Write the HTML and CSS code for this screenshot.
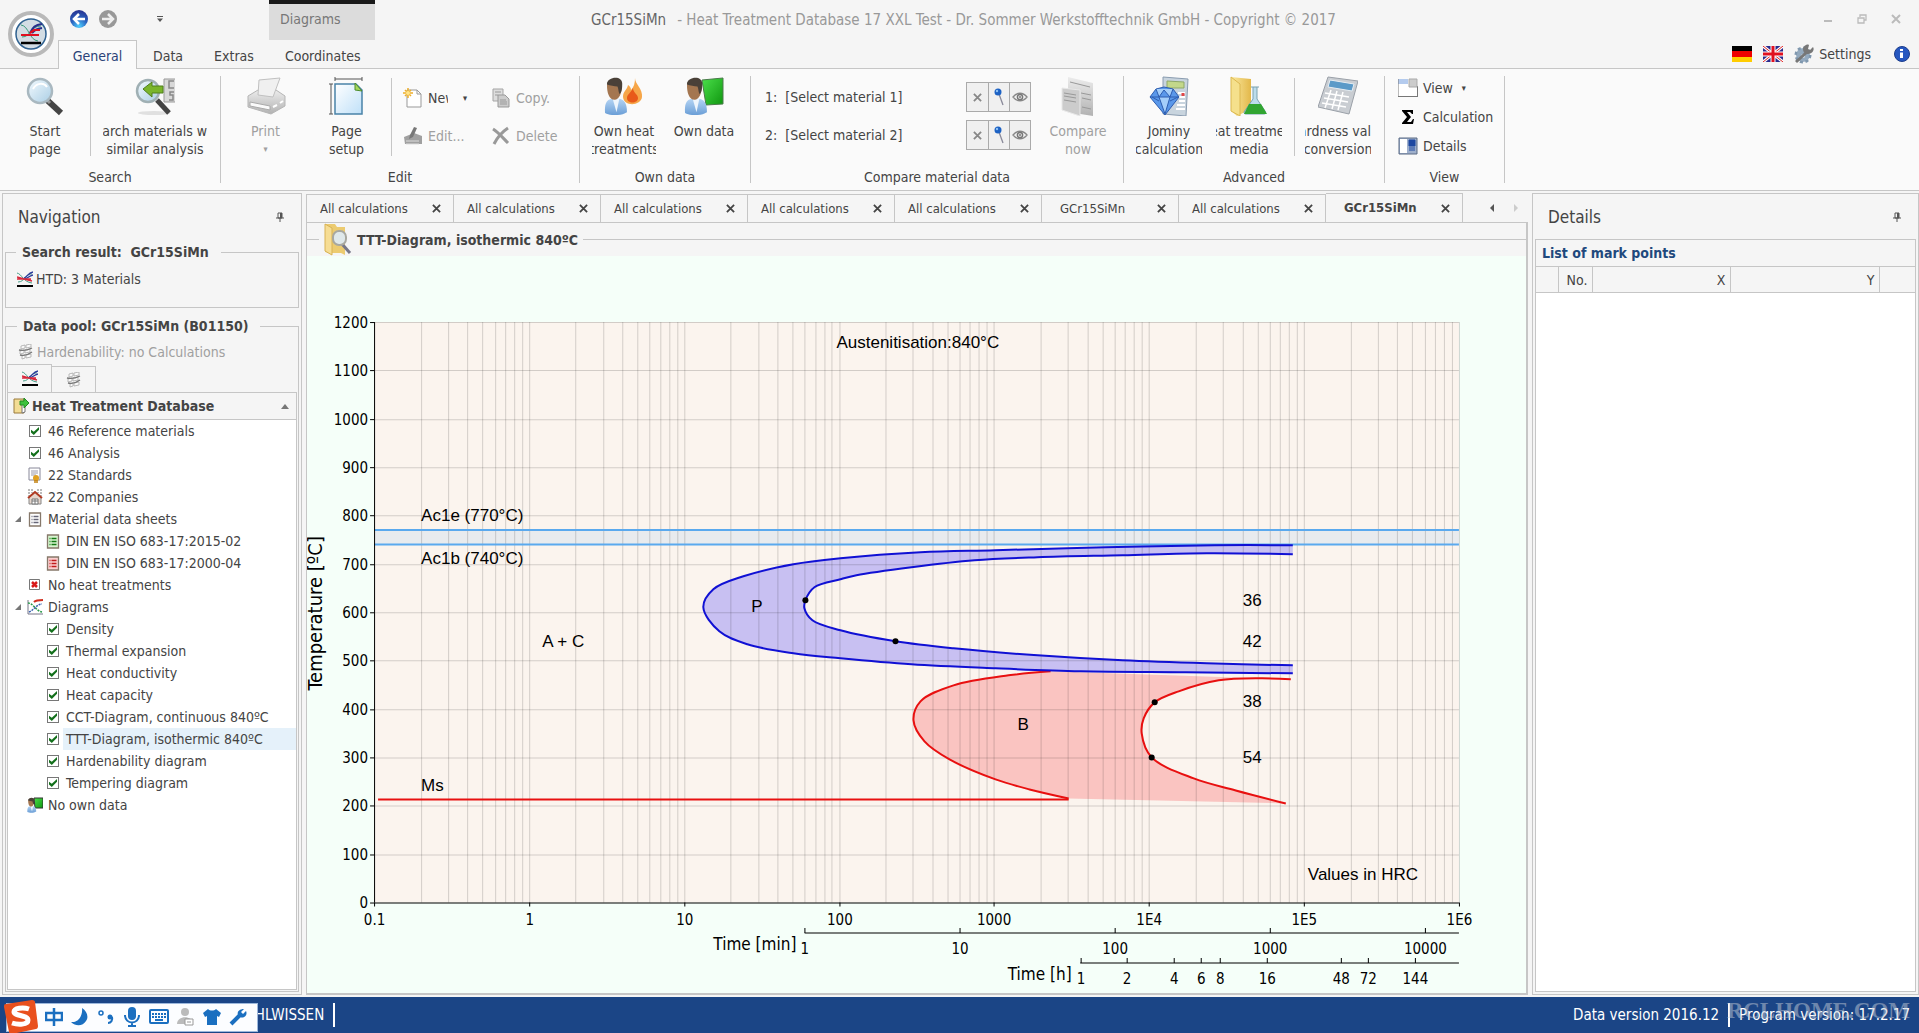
FILE: index.html
```html
<!DOCTYPE html>
<html lang="en">
<head>
    <meta charset="UTF-8">
    <title>GCr15SiMn - Heat Treatment Database 17</title>
    <link rel="stylesheet" href="styles.css">
</head>
<body>

<!-- shared icons -->
<svg class="defs" width="0" height="0">
    <defs>
        <linearGradient id="g-glass" x1="0" y1="0" x2="1" y2="1">
            <stop offset="0" stop-color="#f4fbff"/><stop offset="1" stop-color="#a9cde4"/>
        </linearGradient>
        <linearGradient id="g-page" x1="0" y1="0" x2="1" y2="1">
            <stop offset="0" stop-color="#fff"/><stop offset="1" stop-color="#bfe0f8"/>
        </linearGradient>
        <linearGradient id="g-green" x1="0" y1="0" x2="1" y2="1">
            <stop offset="0" stop-color="#4be04b"/><stop offset="1" stop-color="#0f960f"/>
        </linearGradient>
        <linearGradient id="g-folder" x1="0" y1="0" x2="1" y2="0">
            <stop offset="0" stop-color="#fbe9a0"/><stop offset="1" stop-color="#e3b84a"/>
        </linearGradient>
        <linearGradient id="g-grey" x1="0" y1="0" x2="0" y2="1">
            <stop offset="0" stop-color="#ececec"/><stop offset="1" stop-color="#b2b2b2"/>
        </linearGradient>
        <linearGradient id="g-shirt" x1="0" y1="0" x2="0" y2="1">
            <stop offset="0" stop-color="#b4d4f4"/><stop offset="1" stop-color="#6a9ed6"/>
        </linearGradient>
        <radialGradient id="g-blue" cx=".5" cy=".9" r=".9">
            <stop offset="0" stop-color="#4fd0ff"/><stop offset=".5" stop-color="#2a63c0"/><stop offset="1" stop-color="#27318f"/>
        </radialGradient>
        <symbol id="htd" viewBox="0 0 16 16">
            <path d="M0 2c5 1 6 9 15 10M1 11C8 11 9 2 15 3" stroke="#4aa08a" fill="none"/>
            <path d="M7 7c3-1 4-5 9-6M8 8c3-1 4-3 8-4" stroke="#2a3a9a" fill="none" stroke-width="1.3"/>
            <path d="M0 8h14M0 6l7 2M7 8l8 2" stroke="#d8283c" fill="none" stroke-width="1.4"/>
            <path d="M0 14h16v2H0z" fill="#000"/>
        </symbol>
        <symbol id="coil" viewBox="0 0 16 16">
            <path d="M3 2l4-1v3L3 5zM8 1l5-1v3L8 4zM2 7l4-1v3L2 10zM7 6l5-1v3L7 9zM4 12l3-1v3l-3 1zM8 11l5-1v3l-5 1z" fill="#fafafa" stroke="#aaa" stroke-width=".8"/>
            <path d="M1 6c4 1 9 0 13-2M2 11c4 1 8 0 12-3" fill="none" stroke="#777" stroke-width="1.300"/>
        </symbol>
        <symbol id="person" viewBox="0 0 26 40">
            <path d="M1 38c-1-10 2-15 8-15h6c6 0 9 5 9 14-6 4-18 4-23 1z" fill="url(#g-shirt)"/>
            <path d="M9 23l4 14 3-14z" fill="#eef5fc"/>
            <path d="M3 9c0-7 14-10 15-1 1 7-1 15-7 16-6 0-8-8-8-15z" fill="#a47650"/>
            <path d="M3 8C2 0 20-3 19 8c0 6-1 9-3 10-1-3-1-6-2-8-3 0-8-1-11-2z" fill="#4a4038"/>
        </symbol>
        <symbol id="pin" viewBox="0 0 8 10">
            <path d="M2 1h4v5H2zM0 6h8M4 6v4" fill="none" stroke="#555"/>
            <path d="M4 1h2v5H4z" fill="#555"/>
        </symbol>
        <symbol id="close" viewBox="0 0 10 10">
            <path d="M1 1l8 8M9 1L1 9" stroke="currentColor" stroke-width="2" fill="none"/>
        </symbol>
        <symbol id="bluepin" viewBox="0 0 12 18">
            <path d="M6 6l4 11" stroke="#8a8a9a" stroke-width="1.300"/>
            <circle cx="5" cy="4" r="3.500" fill="#1d62c4"/><circle cx="4" cy="3" r="1.200" fill="#8cc0f4"/>
        </symbol>
        <symbol id="eye" viewBox="0 0 16 10">
            <path d="M1 5c4-5 10-5 14 0-4 5-10 5-14 0z" fill="none" stroke="#888" stroke-width="1.300"/>
            <circle cx="8" cy="5" r="2.600" fill="none" stroke="#777" stroke-width="1.500"/><circle cx="8" cy="5" r="1" fill="#777"/>
        </symbol>
        <symbol id="list" viewBox="0 0 13 15">
            <path d="M1 1h11v13H1z" fill="inherit" stroke="#86786a" stroke-width="1.300"/>
            <path d="M3 4.500h1M5 4.500h5M3 7.500h1M5 7.500h5M3 10.500h1M5 10.500h5" stroke="currentColor" stroke-width="1.300"/>
        </symbol>
    </defs>
</svg>

<header class="top">
    <button class="app" title="Menu">
        <svg width="46" height="46" viewBox="0 0 46 46">
            <circle cx="23" cy="23" r="21" fill="#fff" stroke="#b9b9b9" stroke-width="4"/>
            <circle cx="23" cy="23" r="15" fill="#d3dde4" stroke="#2f6190" stroke-width="1.500"/>
            <path d="M13 14c8 1 8 15 17 16M14 26c9 0 8-11 19-11" stroke="#3a9a78" fill="none"/>
            <path d="M22 22c3-6 5-8 12-9M24 22c3-3 4-4 10-5" stroke="#28308c" stroke-width="2" fill="none"/>
            <path d="M13 24h18M22 22l4-3 6 0" stroke="#e01020" stroke-width="2.200" fill="none"/>
            <path d="M13 32h20" stroke="#000" stroke-width="2.500"/>
        </svg>
    </button>
    <div class="top-main">
        <div class="quick">
            <button title="Back">
                <svg width="18" height="18" viewBox="0 0 18 18"><circle cx="9" cy="9" r="9" fill="url(#g-blue)"/><path d="M15 9H5M9 4L4 9l5 5" stroke="#fff" stroke-width="2.500" fill="none"/></svg>
            </button>
            <button title="Forward">
                <svg width="18" height="18" viewBox="0 0 18 18"><circle cx="9" cy="9" r="9" fill="#989898"/><path d="M3 9h10M9 4l5 5-5 5" stroke="#eee" stroke-width="2.500" fill="none"/></svg>
            </button>
            <button class="quick-more" title="Customize">
                <svg width="6" height="6" viewBox="0 0 6 6"><path d="M0 0h6v1H0zM0 2.500h6L3 6z" fill="#555"/></svg>
            </button>
        </div>
        <nav class="tabs">
            <button class="tab active">General</button>
            <button class="tab">Data</button>
            <button class="tab">Extras</button>
            <button class="tab">Coordinates</button>
        </nav>
    </div>
    <div class="context">Diagrams</div>
    <h1 class="title"><b>GCr15SiMn</b>- Heat Treatment Database 17 XXL Test - Dr. Sommer Werkstofftechnik GmbH - Copyright © 2017</h1>
    <div class="top-right">
        <div class="window">
            <button title="Minimize"><svg width="10" height="10" viewBox="0 0 10 10"><path d="M1 7h8" stroke="#bbb" stroke-width="2"/></svg></button>
            <button title="Restore"><svg width="10" height="10" viewBox="0 0 10 10"><path d="M3 3V1h6v5H7M1 4h6v5H1z" fill="none" stroke="#bbb" stroke-width="1.300"/></svg></button>
            <button title="Close"><svg width="10" height="10"><use href="#close"/></svg></button>
        </div>
        <div class="settings">
            <button title="Deutsch"><svg width="20" height="16" viewBox="0 0 20 16"><path d="M0 0h20v5H0z"/><path d="M0 5h20v6H0z" fill="#e00"/><path d="M0 11h20v5H0z" fill="#fc0"/></svg></button>
            <button title="English">
                <svg width="20" height="16" viewBox="0 0 20 16"><path d="M0 0h20v16H0z" fill="#2a2a8c"/><path d="M0 0l20 16M20 0L0 16" stroke="#fff" stroke-width="3"/><path d="M0 0l20 16M20 0L0 16" stroke="#d22" /><path d="M10 0v16M0 8h20" stroke="#fff" stroke-width="5"/><path d="M10 0v16M0 8h20" stroke="#e01020" stroke-width="3"/></svg>
            </button>
            <button class="with-text">
                <svg width="20" height="20" viewBox="0 0 20 20"><circle cx="9" cy="11" r="7" fill="#9ab0c4" stroke="#7f97ae" stroke-width="3" stroke-dasharray="3 2.500"/><circle cx="9" cy="11" r="6" fill="#93a9be"/><circle cx="9" cy="12" r="2" fill="#dfe7ee"/><path d="M2 18L13 8" stroke="#777" stroke-width="3"/><path d="M12 1c2-1 3 0 3 0l-1 4 2 1 3-3c2 3-1 7-5 7-3 0-5-2-5-5 0-2 1-3 3-4z" fill="#777"/></svg>
                Settings
            </button>
            <button class="info" title="Info">
                <svg width="16" height="16" viewBox="0 0 16 16"><circle cx="8" cy="8" r="7.500" fill="#2657c0" stroke="#1c3c8c"/><path d="M6 6.500h3V12H6zM6 3h3v2H6z" fill="#fff"/></svg>
            </button>
        </div>
    </div>
</header>

<section class="ribbon">
    <div class="group g-search">
        <div class="group-body">
            <button class="big wide">
                <svg width="40" height="40" viewBox="0 0 40 40"><path d="M22 24l14 13" stroke="#444" stroke-width="6"/><path d="M20 22l5 5" stroke="#999" stroke-width="3"/><circle cx="15" cy="15" r="12" fill="url(#g-glass)" stroke="#a9b8c0" stroke-width="2.500"/><path d="M8 13c3-6 11-7 14-2" stroke="#fff" stroke-width="2" fill="none"/></svg>
                <span>Start</span><span>page</span>
            </button>
            <i class="sep"></i>
            <button class="big xwide">
                <svg width="40" height="40" viewBox="0 0 40 40"><ellipse cx="19" cy="37" rx="16" ry="2" fill="#e0e0e0"/><path d="M22 24l12 13" stroke="#444" stroke-width="5"/><circle cx="13" cy="15" r="11" fill="url(#g-glass)" stroke="#a0b0b4" stroke-width="2.500"/><path d="M29 3h12v23H29z" fill="#d8d8d8" stroke="#999"/><path d="M39 5h-5v7h5M39 16h-4v3h3v5h-4" stroke="#888" stroke-width="1.500" fill="none"/><path d="M8 13l9-7v4h11v7H17v4z" fill="#7ab52c" stroke="#4f7f1c"/></svg>
                <span>Search materials with</span><span>similar analysis</span>
            </button>
        </div>
        <h2>Search</h2>
    </div>
    <div class="group g-edit">
        <div class="group-body">
            <button class="big wide" disabled>
                <svg width="40" height="40" viewBox="0 0 40 40"><path d="M2 20l10-6h18l9 6v10l-14 8L2 31z" fill="url(#g-grey)" stroke="#b5b5b5"/><path d="M13 4l21-2-7 19-15-2z" fill="#f0f0f0" stroke="#c0c0c0"/><path d="M4 26l20 4v4L4 30z" fill="#fafafa" stroke="#aaa"/><path d="M27 31l4-2M34 27l3-2" stroke="#fff" stroke-width="2"/></svg>
                <span>Print</span><span class="tiny-arrow">▾</span>
            </button>
            <button class="big wide">
                <svg width="40" height="40" viewBox="0 0 40 40"><path d="M8 3h27M8 1v4M35 1v4M4 8v30M2 8h4M2 38h4" stroke="#555" fill="none"/><path d="M8 8h21l6 6v24H8z" fill="url(#g-page)" stroke="#4a83a8" stroke-width="1.500"/><path d="M28 7l7 8-7-1z" fill="#a6d85c" stroke="#4d8c2c"/></svg>
                <span>Page</span><span>setup</span>
            </button>
            <i class="sep"></i>
            <div class="small-col">
                <button class="small">
                    <svg width="20" height="20" viewBox="0 0 20 20"><path d="M4 2h10l4 4v13H4z" fill="#fff" stroke="#999"/><path d="M14 2v4h4" fill="none" stroke="#999"/><path d="M5 0v10M0 5h10M2 2l6 6M8 2L2 8" stroke="#eeaf2a" stroke-width="1.500"/><circle cx="5" cy="5" r="2" fill="#ffe48a"/></svg>
                    <span class="clip">New</span><span class="arrow">▾</span>
                </button>
                <button class="small" disabled>
                    <svg width="20" height="20" viewBox="0 0 20 20"><path d="M1 11l10-4 8 3v8H2z" fill="#a0a0a0"/><path d="M3 15h13M3 18h13" stroke="#ddd"/><path d="M11 1l3 1-4 9-4 2 1-4z" fill="#777"/></svg>
                    Edit...
                </button>
            </div>
            <div class="small-col">
                <button class="small" disabled>
                    <svg width="20" height="20" viewBox="0 0 20 20"><path d="M2 1h10v12H2z" fill="#ddd" stroke="#a5a5a5"/><path d="M7 7h7l4 4v8H7z" fill="#ccc" stroke="#999"/><path d="M4 4h6M4 7h3M9 12h6M9 14h7M9 16h7" stroke="#999"/></svg>
                    Copy.
                </button>
                <button class="small" disabled>
                    <svg width="20" height="20" viewBox="0 0 20 20"><path d="M2 3c5 3 10 9 15 14M17 2C11 6 6 12 3 18" stroke="#999" stroke-width="3" fill="none"/></svg>
                    Delete
                </button>
            </div>
        </div>
        <h2>Edit</h2>
    </div>
    <div class="group g-own">
        <div class="group-body">
            <button class="big">
                <svg width="40" height="40" viewBox="0 0 40 40"><use href="#person" x="0" y="1" width="25" height="38"/><path d="M31 2c0 6 8 11 7 19-1 9-18 10-19 0 0-6 4-7 5-12 2 1 3 3 3 5 3-3 4-7 4-12z" fill="#f6a649"/><path d="M29 12c0 5 5 6 5 10 0 6-11 6-11 0 0-4 4-5 6-10z" fill="#e85a1a"/></svg>
                <span>Own heat</span><span>treatments</span>
            </button>
            <button class="big">
                <svg width="40" height="40" viewBox="0 0 40 40"><path d="M18 4l21-2v26l-17 1z" fill="url(#g-green)" stroke="#4a7a4a"/><use href="#person" x="0" y="1" width="25" height="38"/></svg>
                <span>Own data</span>
            </button>
        </div>
        <h2>Own data</h2>
    </div>
    <div class="group g-compare">
        <div class="group-body">
            <div class="materials">
                <div class="material">
                    <span>1:&nbsp; [Select material 1]</span>
                    <div class="tools">
                        <button title="Clear"><svg width="9" height="9"><use href="#close"/></svg></button>
                        <button title="Pin"><svg width="12" height="18"><use href="#bluepin"/></svg></button>
                        <button title="Show"><svg width="16" height="10"><use href="#eye"/></svg></button>
                    </div>
                </div>
                <div class="material">
                    <span>2:&nbsp; [Select material 2]</span>
                    <div class="tools">
                        <button title="Clear"><svg width="9" height="9"><use href="#close"/></svg></button>
                        <button title="Pin"><svg width="12" height="18"><use href="#bluepin"/></svg></button>
                        <button title="Show"><svg width="16" height="10"><use href="#eye"/></svg></button>
                    </div>
                </div>
            </div>
            <button class="big" disabled>
                <svg width="40" height="40" viewBox="0 0 40 40"><path d="M10 1l25 6v33l-25-4z" fill="url(#g-grey)"/><path d="M4 12l18 2v26L4 34z" fill="#ccc" stroke="#e8e8e8"/><path d="M12 6l20 5M6 17l12 2M6 20l12 2M6 24l12 2M23 17l10 2M24 22l9 2M24 31l9 2" stroke="#999"/></svg>
                <span>Compare</span><span>now</span>
            </button>
        </div>
        <h2>Compare material data</h2>
    </div>
    <div class="group g-advanced">
        <div class="group-body">
            <button class="big">
                <svg width="40" height="40" viewBox="0 0 40 40"><path d="M14 1l25 2-2 37-23-2z" fill="#c8d4de" stroke="#8a9cb0"/><path d="M18 5l17 1v6H18z" fill="#c3d88a" stroke="#8ea868"/><path d="M29 17h7M30 21h6M30 25h6M28 29h8M27 33h9" stroke="#fff" stroke-width="2"/><path d="M34 17v3" stroke="#e04848" stroke-width="3"/><path d="M7 13l8-2 9 2 6 8-14 18L1 21z" fill="#5a98ea" stroke="#2d5db0"/><path d="M7 13l3 8 5-7 6 7 3-8M1 21h29M10 21l6 17 5-17M3 21l7 4M29 21l-8 4" fill="#a4cefa" stroke="#2d5db0"/></svg>
                <span>Jominy</span><span>calculation</span>
            </button>
            <button class="big">
                <svg width="40" height="40" viewBox="0 0 40 40"><path d="M2 1l20 2v30L8 40l-6-5z" fill="url(#g-folder)"/><path d="M2 1l9 7v32l-9-5z" fill="#f5e08c" stroke="#dcb850"/><path d="M22 11h8M24 11v12L15 36c0 2 1 2 2 2h18c2 0 2-1 1-3L28 23V11" fill="#bcdcec" stroke="#7aa2b0"/><path d="M20 28h12l6 10H15z" fill="#31a531"/></svg>
                <span>Heat treatment</span><span>media</span>
            </button>
            <i class="sep"></i>
            <button class="big">
                <svg width="40" height="40" viewBox="0 0 40 40"><path d="M10 1l30 4-9 33L0 31z" fill="#c9cdd2" stroke="#9aa0a8"/><path d="M12 4l24 4-2 7-24-4z" fill="#5b9ac8" stroke="#e8eef2"/><path d="M7 17l24 4M6 22l24 4M4 27l24 4M13 14L7 32M19 15l-5 18M25 16l-5 18" stroke="#fff" stroke-width="1.500"/></svg>
                <span>Hardness value</span><span>conversion</span>
            </button>
        </div>
        <h2>Advanced</h2>
    </div>
    <div class="group g-view">
        <div class="group-body">
            <div class="view-col">
                <button class="small">
                    <svg width="20" height="20" viewBox="0 0 20 20"><path d="M0 1h20v18H0z" fill="#fff"/><path d="M0 1h10v5H0z" fill="#b4cbee"/><path d="M0 18.500h20M19.500 8v11M0 1v18" stroke="#777" fill="none"/><path d="M11 1h8v8h-8z" fill="#ccc" stroke="#aaa"/></svg>
                    View<span class="arrow">▾</span>
                </button>
                <button class="small">
                    <svg width="20" height="20" viewBox="0 0 20 20"><path d="M4 3h11v4h-1l-2-2H9l4 5-4 5h4l2-3h1l-1 5H4v-1l5-6-5-6z"/></svg>
                    Calculation
                </button>
                <button class="small">
                    <svg width="20" height="20" viewBox="0 0 20 20"><path d="M1 2h18v16H1z" fill="#9fb0cc" stroke="#5a6a84"/><path d="M2 3h7v14H2z" fill="#fff"/><path d="M11 4h6v6h-6zM11 12h6M11 14h6" fill="#1f48a0" stroke="#1f48a0"/></svg>
                    Details
                </button>
            </div>
        </div>
        <h2>View</h2>
    </div>
</section>

<main class="work">
    <aside class="panel nav">
        <div class="panel-head"><h2>Navigation</h2><button title="Auto hide"><svg width="8" height="10"><use href="#pin"/></svg></button></div>
        <fieldset class="box result">
            <legend>Search result:&nbsp; GCr15SiMn</legend>
            <div class="line"><svg width="16" height="16"><use href="#htd"/></svg>HTD: 3 Materials</div>
        </fieldset>
        <fieldset class="box pool">
            <legend>Data pool: GCr15SiMn (B01150)</legend>
            <div class="line off"><svg width="16" height="16"><use href="#coil"/></svg>Hardenability: no Calculations</div>
            <div class="pool-tabs">
                <button class="active" title="Database"><svg width="16" height="16"><use href="#htd"/></svg></button>
                <button title="Hardenability"><svg width="16" height="16"><use href="#coil"/></svg></button>
            </div>
            <div class="pool-head">
                <svg width="16" height="16" viewBox="0 0 16 16"><path d="M1 1h10v14H1z" fill="#f3dc94" stroke="#9a7a3c"/><path d="M9 3v12l3-1V6z" fill="#fff" stroke="#777"/><path d="M7 3h4V0l5 5-5 5V7H7z" fill="#3ec23e" stroke="#238a23"/></svg>
                <h3>Heat Treatment Database</h3>
                <svg width="8" height="5" viewBox="0 0 8 5"><path d="M0 5h8L4 0z" fill="#777"/></svg>
            </div>
            <ul class="tree">
                <li><input type="checkbox" id="n1" checked><label for="n1">46 Reference materials</label></li>
                <li><input type="checkbox" id="n2" checked><label for="n2">46 Analysis</label></li>
                <li><svg width="16" height="16" viewBox="0 0 16 16"><path d="M2 1h11v12H2z" fill="#fff" stroke="#889"/><path d="M4 4h7M4 6h7M4 8h5" stroke="#99a"/><circle cx="9" cy="11" r="3" fill="#e0a020"/><path d="M8 13v3M10 13v3" stroke="#c08010" stroke-width="1.500"/></svg><a href="#">22 Standards</a></li>
                <li><svg width="16" height="16" viewBox="0 0 16 16"><path d="M2 0v7M5 0v4M11 0v4M14 0v7" stroke="#777" stroke-dasharray="2 1"/><path d="M2 8l6-5 6 5v7H2z" fill="#e6d6cc" stroke="#888"/><path d="M1 9l7-6 7 6" stroke="#b03a22" stroke-width="2" fill="none"/><path d="M5 10h6v5H5z" fill="#fff" stroke="#777"/><path d="M8 10v5M5 12h6" stroke="#777"/></svg><a href="#">22 Companies</a></li>
                <li class="open"><svg class="i-white" width="16" height="15"><use href="#list"/></svg><a href="#">Material data sheets</a></li>
                <li class="sub"><svg class="i-green" width="16" height="15"><use href="#list"/></svg><a href="#">DIN EN ISO 683-17:2015-02</a></li>
                <li class="sub"><svg class="i-red" width="16" height="15"><use href="#list"/></svg><a href="#">DIN EN ISO 683-17:2000-04</a></li>
                <li><svg width="16" height="16" viewBox="0 0 16 16"><path d="M2.500 2.500h10v10h-10z" fill="#fff" stroke="#777"/><path d="M5 5l5 5M10 5l-5 5" stroke="#d81818" stroke-width="2.500"/></svg><a href="#">No heat treatments</a></li>
                <li class="open"><svg width="16" height="16" viewBox="0 0 16 16"><path d="M1 1v14h15" fill="none" stroke="#778"/><path d="M1 4c5 0 8 8 14 9" stroke="#2a9a4a" fill="none" stroke-width="1.500" stroke-dasharray="2 1"/><path d="M2 13c5-2 8-8 13-8" stroke="#3a62b0" fill="none" stroke-width="1.500" stroke-dasharray="2 1"/><path d="M7 3c2-2 5-2 9-2" stroke="#d03020" fill="none" stroke-width="2"/></svg><a href="#">Diagrams</a></li>
                <li class="sub"><input type="checkbox" id="d1" checked><label for="d1">Density</label></li>
                <li class="sub"><input type="checkbox" id="d2" checked><label for="d2">Thermal expansion</label></li>
                <li class="sub"><input type="checkbox" id="d3" checked><label for="d3">Heat conductivity</label></li>
                <li class="sub"><input type="checkbox" id="d4" checked><label for="d4">Heat capacity</label></li>
                <li class="sub"><input type="checkbox" id="d5" checked><label for="d5">CCT-Diagram, continuous 840ºC</label></li>
                <li class="sub selected"><input type="checkbox" id="d6" checked><label for="d6">TTT-Diagram, isothermic 840ºC</label></li>
                <li class="sub"><input type="checkbox" id="d7" checked><label for="d7">Hardenability diagram</label></li>
                <li class="sub"><input type="checkbox" id="d8" checked><label for="d8">Tempering diagram</label></li>
                <li><svg width="16" height="16" viewBox="0 0 16 16"><path d="M7 1h9v10H8z" fill="url(#g-green)" stroke="#333"/><use href="#person" x="0" y="0" width="10" height="16"/></svg><a href="#">No own data</a></li>
            </ul>
        </fieldset>
    </aside>

    <section class="center">
        <div class="docs">
            <div class="doc"><button class="name">All calculations</button><button class="x" title="Close"><svg width="9" height="9"><use href="#close"/></svg></button></div>
            <div class="doc"><button class="name">All calculations</button><button class="x" title="Close"><svg width="9" height="9"><use href="#close"/></svg></button></div>
            <div class="doc"><button class="name">All calculations</button><button class="x" title="Close"><svg width="9" height="9"><use href="#close"/></svg></button></div>
            <div class="doc"><button class="name">All calculations</button><button class="x" title="Close"><svg width="9" height="9"><use href="#close"/></svg></button></div>
            <div class="doc"><button class="name">All calculations</button><button class="x" title="Close"><svg width="9" height="9"><use href="#close"/></svg></button></div>
            <div class="doc material-doc"><button class="name">GCr15SiMn</button><button class="x" title="Close"><svg width="9" height="9"><use href="#close"/></svg></button></div>
            <div class="doc"><button class="name">All calculations</button><button class="x" title="Close"><svg width="9" height="9"><use href="#close"/></svg></button></div>
            <div class="doc material-doc active"><button class="name">GCr15SiMn</button><button class="x" title="Close"><svg width="9" height="9"><use href="#close"/></svg></button></div>
            <div class="scroll">
                <button title="Previous"><svg width="4" height="8" viewBox="0 0 4 8"><path d="M4 0v8L0 4z" fill="#555"/></svg></button>
                <button title="Next"><svg width="4" height="8" viewBox="0 0 4 8"><path d="M0 0v8l4-4z" fill="#ccc"/></svg></button>
            </div>
        </div>
        <div class="sheet">
            <div class="sheet-head">
                <svg width="28" height="33" viewBox="0 0 28 33"><path d="M1 1h10l2 3h8v28l-4-2H6l-5-1z" fill="#eccb70"/><path d="M1 1l7 4v27l-7-4z" fill="#f6dd94" stroke="#d8b254"/><path d="M18 21l8 9" stroke="#778" stroke-width="3"/><rect x="9" y="8" width="13" height="14" rx="6" fill="#dfe8ea" stroke="#a8a8a0" stroke-width="2"/></svg>
                <h2>TTT-Diagram, isothermic 840ºC</h2>
            </div>
            <svg class="chart" id="chart" viewBox="0 0 1218 736"></svg>
        </div>
    </section>

    <aside class="panel details">
        <div class="panel-head"><h2>Details</h2><button title="Auto hide"><svg width="8" height="10"><use href="#pin"/></svg></button></div>
        <div class="marks">
            <table>
                <caption>List of mark points</caption>
                <thead>
                <tr><th class="c-mark"></th><th class="c-no">No.</th><th class="c-x">X</th><th>Y</th><th class="c-end"></th></tr>
                </thead>
            </table>
        </div>
    </aside>
</main>

<footer class="status">
    <span class="brand">STAHLWISSEN</span>
    <span class="version">Data version 2016.12</span>
    <span class="program">Program version: 17.2.17<em>RCLHOME.COM</em></span>
    <div class="ime">
        <svg class="sogou" width="36" height="36" viewBox="0 0 36 36"><path d="M3 5l26-4c2 0 3 1 3 2l3 24c0 2-1 3-2 3L9 35c-2 0-3-1-3-2L1 8c0-2 0-3 2-3z" fill="#e9501e"/><path d="M26 10c-6-2-15-1-15 3s14 3 14 8-10 5-16 3" fill="none" stroke="#fff" stroke-width="5"/></svg>
        <svg width="18" height="18" viewBox="0 0 18 18"><path d="M1 5h16v7H1zM9 0v18" fill="none" stroke="#1b6fc0" stroke-width="2.500"/></svg>
        <svg width="18" height="18" viewBox="0 0 18 18"><path d="M11 0c5 3 7 9 4 13-3 5-10 6-15 1 7 1 12-6 11-14z" fill="#1b6fc0"/></svg>
        <svg width="18" height="18" viewBox="0 0 18 18"><circle cx="4" cy="5" r="2" fill="none" stroke="#1b6fc0" stroke-width="1.500"/><circle cx="13" cy="9" r="2.500" fill="#1b6fc0"/><path d="M15 9c1 3-1 6-4 6" fill="none" stroke="#1b6fc0" stroke-width="2"/></svg>
        <svg width="18" height="20" viewBox="0 0 18 20"><rect x="5" y="0" width="8" height="13" rx="4" fill="#1b6fc0"/><path d="M2 8c0 10 14 10 14 0M9 15v4M5 19h8" fill="none" stroke="#1b6fc0" stroke-width="2"/></svg>
        <svg width="20" height="18" viewBox="0 0 20 18"><rect x="1" y="2" width="18" height="13" rx="1" fill="none" stroke="#1b6fc0" stroke-width="2"/><path d="M3 6h14M3 9h14" stroke="#1b6fc0" stroke-width="2" stroke-dasharray="2 1"/><path d="M6 12h8" stroke="#1b6fc0" stroke-width="2"/></svg>
        <svg width="18" height="20" viewBox="0 0 18 20"><circle cx="8" cy="5" r="4" fill="#bbb"/><path d="M0 17c0-9 16-9 16 0z" fill="#bbb"/><path d="M8 12h8v6H8z" fill="#fff" stroke="#999"/><path d="M10 15h4" stroke="#999"/></svg>
        <svg width="18" height="18" viewBox="0 0 18 18"><path d="M5 1c2 2 6 2 8 0l5 4-2 4-2-1v9H4V8L2 9 0 5z" fill="#1b6fc0"/></svg>
        <svg width="18" height="18" viewBox="0 0 18 18"><path d="M2 16l9-9" stroke="#1b6fc0" stroke-width="4"/><path d="M15 1l-3 3 2 2 3-3c2 4-2 8-6 6s-3-8 4-8z" fill="#1b6fc0"/></svg>
    </div>
</footer>

<script src="chart.js"></script>
</body>
</html>
```
FILE: styles.css
```css
* {
    margin: 0;
    padding: 0;
    box-sizing: border-box;
}

body {
    display: flex;
    flex-direction: column;
    min-height: 100vh;
    font: 14px/18px "DejaVu Sans Condensed", "DejaVu Sans", sans-serif;
    color: #444;
    background: #f5f5f5;
}

button {
    font: inherit;
    color: inherit;
    background: none;
    border: none;
}

svg {
    display: block;
    flex-shrink: 0;
}

h1, h2, h3 {
    font-size: inherit;
    font-weight: normal;
}

.defs {
    position: absolute;
}

/* title bar and ribbon tabs */
.top {
    display: flex;
    height: 69px;
    border-bottom: 1px solid #c6c6c6;
}

.app {
    width: 58px;
    padding: 0 4px 0 8px;
}

.top-main {
    width: 211px;
    flex-shrink: 0;
}

.quick {
    display: flex;
    align-items: center;
    gap: 11px;
    height: 40px;
    padding: 0 0 2px 12px;
}

.quick-more {
    margin-left: 29px;
}

.tabs {
    display: flex;
    width: 340px;
    height: 29px;
}

.tab {
    padding: 2px 15px 0 16px;
    white-space: nowrap;
}

.tab.active {
    width: 79px;
    padding: 1px 0 0;
    color: #2b4278;
    background: #fafafa;
    border: 1px solid #c6c6c6;
    border-bottom: none;
}

.context {
    width: 106px;
    height: 40px;
    padding: 6px 11px;
    color: #777;
    background: #dcdcdc;
    border-top: 4px solid #1a1a1a;
}

.title {
    flex: 1;
    padding: 11px 0 0 216px;
    font-size: 15px;
    white-space: nowrap;
    color: #999;
}

.title b {
    margin-right: 11px;
    font-weight: normal;
    color: #666;
}

.top-right {
    display: flex;
    flex-direction: column;
    align-items: flex-end;
    padding-right: 9px;
}

.window {
    display: flex;
    align-items: center;
    gap: 24px;
    height: 40px;
    padding: 0 9px 2px 0;
    color: #bbb;
}

.settings {
    display: flex;
    align-items: center;
    gap: 11px;
    height: 28px;
}

.with-text {
    display: flex;
    align-items: center;
    gap: 5px;
}

.info {
    margin-left: 12px;
}

/* ribbon */
.ribbon {
    display: flex;
    padding: 7px 0;
    background: #fafafa;
    border-bottom: 1px solid #c6c6c6;
}

.group {
    display: flex;
    flex-direction: column;
    height: 107px;
    border-right: 1px solid #c6c6c6;
}

.group h2 {
    line-height: 12px;
    text-align: center;
}

.group-body {
    display: flex;
    height: 96px;
}

.g-search {
    width: 221px;
}

.g-edit {
    width: 359px;
}

.g-edit .group-body {
    padding-left: 4px;
}

.g-own {
    width: 171px;
}

.g-own .group-body,
.g-advanced .group-body {
    gap: 16px;
    padding-left: 12px;
}

.g-compare {
    width: 373px;
}

.g-advanced {
    width: 261px;
}

.g-view {
    width: 120px;
}

.big {
    display: flex;
    flex-direction: column;
    align-items: center;
    width: 66px;
    overflow: hidden;
    white-space: nowrap;
}

.g-own .big {
    width: 64px;
}

.g-advanced .group-body {
    gap: 14px;
}

.big svg {
    margin-bottom: 6px;
}

.big.wide {
    width: 81px;
}

.g-search .wide {
    width: 90px;
}

.big.xwide {
    width: 104px;
    margin-left: 12px;
}

button:disabled {
    color: #a0a0a0;
}

.sep {
    width: 1px;
    height: 78px;
    margin-top: 2px;
    background: #c6c6c6;
}

.g-edit .sep {
    margin: 2px 11px 0 4px;
}

.g-advanced .sep {
    margin: 2px -4px 0 -2px;
}

.tiny-arrow,
.arrow {
    font-size: 9px;
}

.arrow {
    margin-left: 4px;
}

.small-col {
    display: flex;
    flex-direction: column;
    gap: 18px;
    width: 88px;
    padding-top: 12px;
}

.small {
    display: flex;
    align-items: center;
    gap: 5px;
    height: 20px;
    white-space: nowrap;
}

.clip {
    width: 20px;
    overflow: hidden;
}

.clip + .arrow {
    margin-left: 10px;
}

.materials {
    display: flex;
    flex-direction: column;
    gap: 8px;
    width: 280px;
    margin-right: 14px;
    padding: 6px 0 0 14px;
}

.material {
    display: flex;
    align-items: center;
    justify-content: space-between;
}

.tools {
    display: flex;
    height: 30px;
    background: #f0f0f0;
    border: 1px solid #aaa;
    color: #888;
}

.tools button {
    display: flex;
    align-items: center;
    justify-content: center;
    width: 21px;
}

.tools button + button {
    border-left: 1px solid #aaa;
}

.view-col {
    display: flex;
    flex-direction: column;
    gap: 9px;
    padding: 2px 0 0 13px;
}

/* working area */
.work {
    flex: 1;
    display: grid;
    grid-template-columns: 300px minmax(0, 1fr) 387px;
    gap: 4px;
    padding: 2px 0 2px 2px;
}

.panel {
    display: flex;
    flex-direction: column;
    border: 1px solid #c6c6c6;
    padding: 2px;
}

.panel-head {
    display: flex;
    align-items: center;
    justify-content: space-between;
    height: 43px;
    padding: 0 15px 2px 13px;
}

.panel-head h2 {
    font-size: 17px;
}

.box {
    min-width: 0;
    border: 1px solid #c6c6c6;
}

.box legend {
    margin-left: 10px;
    padding: 0 12px 0 6px;
    font-weight: bold;
}

.result {
    height: 65px;
    margin-top: 4px;
}

.pool {
    flex: 1;
    display: flex;
    flex-direction: column;
    margin-top: 9px;
    padding: 0 1px 1px;
}

.line {
    display: flex;
    align-items: center;
    gap: 3px;
    height: 36px;
    padding-left: 11px;
}

.pool .line {
    height: 29px;
    padding-top: 5px;
}

.off {
    color: #a0a0a0;
}

.pool-tabs {
    display: flex;
    align-items: flex-end;
}

.pool-tabs button {
    display: flex;
    justify-content: center;
    width: 44px;
    height: 26px;
    padding-top: 5px;
    border: 1px solid #c6c6c6;
    border-width: 1px 1px 0 0;
}

.pool-tabs .active {
    width: 45px;
    height: 28px;
    border-left-width: 1px;
}

.pool-head {
    display: flex;
    align-items: center;
    gap: 3px;
    height: 28px;
    padding: 0 7px 0 5px;
    border: 1px solid #c6c6c6;
}

.pool-head h3 {
    flex: 1;
    font-weight: bold;
}

.tree {
    flex: 1;
    list-style: none;
    background: #fff;
    border: 1px solid #c6c6c6;
    border-top: none;
}

.tree li {
    display: flex;
    align-items: center;
    height: 22px;
    padding-left: 19px;
}

.tree .sub {
    padding-left: 37px;
}

/* expander triangle */
.tree .open::before {
    content: "";
    width: 6px;
    height: 6px;
    margin: 0 6px 0 -12px;
    background: #777;
    clip-path: polygon(100% 0, 100% 100%, 0 100%);
}

.tree a,
.tree label {
    flex: 1;
    padding-left: 3px;
    margin-left: 2px;
    line-height: 22px;
    color: inherit;
    text-decoration: none;
    white-space: nowrap;
}

.tree .selected label {
    background: #e5f1fa;
}

.tree input {
    display: flex;
    align-items: center;
    justify-content: center;
    width: 12px;
    height: 12px;
    margin: 0 2px;
    appearance: none;
    background: #fff;
    border: 1px solid #777;
}

.tree input:checked::before {
    content: "";
    width: 8px;
    height: 8px;
    background: #14701c;
    clip-path: polygon(0 35%, 35% 60%, 100% 0, 100% 35%, 35% 100%, 0 70%);
}

.i-white {
    fill: #fff;
    color: #667;
}

.i-green {
    fill: #d8f4d0;
    color: #157a15;
}

.i-red {
    fill: #fbd0d0;
    color: #c01c1c;
}

/* document tabs */
.center {
    display: flex;
    flex-direction: column;
}

.docs {
    display: flex;
    align-items: flex-end;
    height: 29px;
    font-size: 13px;
}

.doc {
    display: flex;
    align-items: center;
    justify-content: space-between;
    width: 147px;
    height: 28px;
    padding: 0 12px 0 13px;
    border: 1px solid #c6c6c6;
    border-width: 1px 1px 0 0;
    white-space: nowrap;
}

.doc:first-child {
    width: 148px;
    border-left-width: 1px;
}

.doc.material-doc {
    width: 137px;
    padding-left: 18px;
}

.doc.active {
    height: 29px;
    font-weight: bold;
}

.scroll {
    display: flex;
    align-items: center;
    gap: 20px;
    height: 29px;
    padding-left: 27px;
}

.sheet {
    flex: 1;
    display: flex;
    flex-direction: column;
    background: #f5fff9;
    border: 1px solid #c6c6c6;
    border-width: 1px 2px 2px 1px;
}

.sheet-head {
    display: flex;
    align-items: center;
    gap: 5px;
    height: 33px;
    background: #f5f5f5;
}

.sheet-head::before,
.sheet-head::after {
    content: "";
    width: 12px;
    height: 1px;
    background: #c6c6c6;
}

.sheet-head::after {
    flex: 1;
}

.sheet-head h2 {
    font-weight: bold;
}

/* diagram */
.chart {
    width: 100%;
    font-size: 15px;
}

.plot {
    fill: #fbf4ee;
}

.grid {
    stroke: #000;
    stroke-opacity: .16;
}

.axis {
    stroke: #000;
    fill: none;
}

.band {
    fill: #9fc8ee;
    fill-opacity: .2;
}

.ac {
    stroke: #5aa9ee;
    stroke-width: 2;
}

.pearlite {
    fill: #8078f8;
    fill-opacity: .42;
}

.bainite {
    fill: #f88a8a;
    fill-opacity: .45;
}

.blue {
    fill: none;
    stroke: #1010d4;
    stroke-width: 2;
}

.red {
    fill: none;
    stroke: #e81010;
    stroke-width: 2;
}

.note {
    font-family: "Liberation Sans", Arial, sans-serif;
    font-size: 17px;
}

.unit {
    font-size: 17px;
}

.axis-title {
    font-size: 20px;
}

/* details */
.marks {
    flex: 1;
    background: #fff;
    border: 1px solid #c6c6c6;
}

.marks table {
    width: 100%;
    table-layout: fixed;
    border-collapse: collapse;
    background: #f5f5f5;
}

.marks caption {
    height: 26px;
    padding-left: 6px;
    font-weight: bold;
    line-height: 27px;
    text-align: left;
    color: #1f497d;
    background: #f5f5f5;
}

.marks th {
    height: 26px;
    padding: 0 4px;
    font-weight: normal;
    text-align: right;
    border: 1px solid #c6c6c6;
    border-left: none;
}

.marks .c-mark {
    width: 22px;
}

.marks .c-no {
    width: 34px;
}

.marks .c-x {
    width: 138px;
}

.marks .c-end {
    width: 36px;
    border-right: none;
}

/* status bar */
.status {
    position: relative;
    display: flex;
    align-items: center;
    height: 37px;
    padding: 0 9px 0 230px;
    font-size: 15px;
    color: #fff;
    background: #1b4586;
    border-bottom: 1px solid #0a1a30;
}

.brand {
    flex: 1;
}

.brand::after,
.version::after {
    content: "";
    display: inline-block;
    width: 2px;
    height: 24px;
    margin: 0 9px;
    vertical-align: middle;
    background: #fff;
}

.program {
    position: relative;
}

/* site mark lies over the program version */
.program em {
    position: absolute;
    right: 0;
    bottom: 3px;
    font: bold 23px/20px "Liberation Serif", "Times New Roman", serif;
    color: #c0c8d4;
    opacity: .5;
}

/* floating input method bar */
.ime {
    position: absolute;
    left: 6px;
    bottom: 1px;
    display: flex;
    align-items: center;
    gap: 8px;
    width: 252px;
    height: 29px;
    background: #fcfdff;
    border: 1px solid #9db8dc;
}

.sogou {
    margin: 0 -2px 0 -4px;
}
```
FILE: chart.js
```js
var NS = 'http://www.w3.org/2000/svg';
var chart = document.getElementById('chart');

// plot rectangle
var left = 67, top0 = 66, width = 1084, height = 580;
var decades = 7;

function add(name, attrs, text) {
    var el = document.createElementNS(NS, name);
    for (var key in attrs) {
        el.setAttribute(key, attrs[key]);
    }
    if (text !== undefined) {
        el.textContent = text;
    }
    chart.appendChild(el);
    return el;
}

// seconds -> x, degrees -> y
function tx(sec) {
    return left + (Math.log10(sec) + 1) * width / decades;
}

function ty(deg) {
    return top0 + height - deg * height / 1200;
}

function line(cls, x1, y1, x2, y2) {
    add('line', {'class': cls, x1: x1, y1: y1, x2: x2, y2: y2});
}

function crisp(v) {
    return Math.round(v) + 0.5;
}

function label(text, x, y, cls, anchor) {
    add('text', {x: x, y: y, 'class': cls || '', 'text-anchor': anchor || 'start'}, text);
}

// smooth path through points given relative to the plot rectangle
function curve(points, start) {
    var p = points.map(function (q) {
        return [q[0] + left, q[1] + top0];
    });
    var d = (start || 'M') + p[0].join(' ');
    for (var i = 0; i < p.length - 1; i++) {
        var a = p[i - 1] || p[i], b = p[i], c = p[i + 1], e = p[i + 2] || c;
        var ab = Math.sqrt(Math.hypot(b[0] - a[0], b[1] - a[1])) || 1;
        var bc = Math.sqrt(Math.hypot(c[0] - b[0], c[1] - b[1])) || 1;
        var ce = Math.sqrt(Math.hypot(e[0] - c[0], e[1] - c[1])) || 1;
        var c1 = [], c2 = [];
        for (var k = 0; k < 2; k++) {
            c1[k] = a === b ? b[k] : (ab * ab * c[k] - bc * bc * a[k] + (2 * ab * ab + 3 * ab * bc + bc * bc) * b[k]) / (3 * ab * (ab + bc));
            c2[k] = e === c ? c[k] : (ce * ce * b[k] - bc * bc * e[k] + (2 * ce * ce + 3 * ce * bc + bc * bc) * c[k]) / (3 * ce * (ce + bc));
        }
        d += 'C' + c1.join(' ') + ' ' + c2.join(' ') + ' ' + c.join(' ');
    }
    return d;
}

var pStart = [[918, 223], [840, 223], [731, 225], [621, 228], [546, 230], [466, 236], [419, 242], [369, 254], [339, 267], [329, 285], [345, 309], [373, 322], [419, 331], [466, 336], [537, 342], [621, 346], [706, 349], [811, 350], [918, 351]];
var pEnd = [[918, 232], [832, 231], [748, 233], [663, 235], [600, 238], [537, 245], [482, 253], [466, 257], [440, 265], [431, 278], [430, 286], [438, 298], [466, 308], [521, 319], [579, 326], [663, 333], [748, 338], [832, 341], [918, 343]];
var bStart = [[676, 349], [634, 353], [579, 363], [546, 379], [539, 398], [550, 419], [575, 437], [621, 457], [655, 467], [694, 476]];
var bEnd = [[916, 357], [886, 356], [844, 358], [804, 369], [780, 380], [769, 396], [767, 411], [777, 435], [819, 456], [861, 468], [911, 481]];

add('rect', {'class': 'plot', x: left, y: top0, width: width, height: height});
add('rect', {'class': 'band', x: left, y: ty(770), width: width, height: ty(740) - ty(770)});
add('path', {'class': 'pearlite', d: curve(pStart) + curve(pEnd.slice().reverse(), 'L') + 'Z'});
add('path', {'class': 'bainite', d: curve(bStart) + curve(bEnd.slice().reverse(), 'L') + 'Z'});

// logarithmic grid
var i, k, x, y;
for (i = 0; i < decades; i++) {
    for (k = 2; k <= 10; k++) {
        x = crisp(tx(k * Math.pow(10, i - 1)));
        line('grid', x, top0, x, top0 + height);
    }
}
for (i = 100; i <= 1200; i += 100) {
    y = crisp(ty(i));
    line('grid', left, y, left + width, y);
}

line('ac', left, ty(770), left + width, ty(770));
line('ac', left, ty(740), left + width, ty(740));
line('red', 71, 543, 761, 543);
add('path', {'class': 'red', d: curve(bStart)});
add('path', {'class': 'red', d: curve(bEnd)});
add('path', {'class': 'blue', d: curve(pStart)});
add('path', {'class': 'blue', d: curve(pEnd)});
[[431, 278], [521, 319], [780, 380], [777, 435]].forEach(function (q) {
    add('circle', {cx: q[0] + left, cy: q[1] + top0, r: 3});
});

// temperature axis
line('axis', crisp(left), top0, crisp(left), top0 + height);
for (i = 0; i <= 1200; i += 100) {
    y = crisp(ty(i));
    line('axis', left - 4, y, left, y);
    label(i, 61, y + 5, '', 'end');
}
add('text', {'class': 'axis-title', x: 0, y: 0, 'text-anchor': 'middle', transform: 'translate(15 357) rotate(-90)'}, 'Temperature [ºC]');

// time axes: seconds, minutes, hours
line('axis', left, 646.5, left + width, 646.5);
['0.1', '1', '10', '100', '1000', '1E4', '1E5', '1E6'].forEach(function (t, n) {
    x = crisp(left + n * width / decades);
    line('axis', x, 646, x, 650);
    label(t, x, 668, '', 'middle');
});

function timeAxis(values, unit, yLine) {
    line('axis', tx(unit), yLine, left + width, yLine);
    values.forEach(function (v) {
        x = crisp(tx(v * unit));
        line('axis', x, yLine - 5, x, yLine);
        label(v, x, yLine + 21, '', 'middle');
    });
}

timeAxis([1, 10, 100, 1000, 10000], 60, 676.5);
timeAxis([1, 2, 4, 6, 8, 16, 48, 72, 144], 3600, 706.5);
label('Time [min]', 489, 693, 'unit', 'end');
label('Time [h]', 764, 723, 'unit', 'end');

label('Austenitisation:840°C', 529, 92, 'note');
label('Ac1e (770°C)', 114, 265, 'note');
label('Ac1b (740°C)', 114, 308, 'note');
label('A + C', 235, 391, 'note');
label('Ms', 114, 535, 'note');
label('P', 444, 356, 'note');
label('B', 710, 474, 'note');
label('36', 935, 350, 'note');
label('42', 935, 391, 'note');
label('38', 935, 451, 'note');
label('54', 935, 507, 'note');
label('Values in HRC', 1000, 623, 'note');
```
